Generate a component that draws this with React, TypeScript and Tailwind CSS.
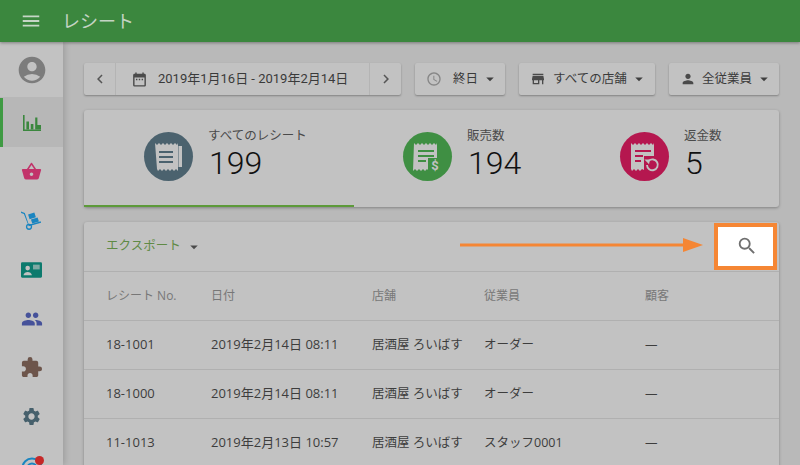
import {
  MdMenu,
  MdAccountCircle,
  MdShoppingBasket,
  MdPeople,
  MdExtension,
  MdSettings,
  MdChevronLeft,
  MdChevronRight,
  MdDateRange,
  MdAccessTime,
  MdStore,
  MdPerson,
  MdArrowDropDown,
  MdSearch,
} from "react-icons/md";
import type { ReactNode } from "react";

const FONT = "font-['Roboto','Noto_Sans_CJK_JP',sans-serif]";
const BODY_FONT = "font-['Open_Sans','Noto_Sans_CJK_JP',sans-serif]";

const rows = [
  { id: "18-1001", date: "2019年2月14日 08:11", staff: "オーダー" },
  { id: "18-1000", date: "2019年2月14日 08:11", staff: "オーダー" },
  { id: "11-1013", date: "2019年2月13日 10:57", staff: "スタッフ0001" },
];

const ZIGZAG_TOP = "M1 1l2 2 2-2 2 2 2-2 2 2 2-2 2 2 2-2 2 2 2-2 2 2 1-2";

function BarsIcon() {
  return (
    <svg viewBox="0 0 18 16" className="w-[18px] h-[16px]" fill="#3b873e">
      <path d="M0 0h1.6v14.4H18V16H0z" />
      <path d="M3.4 6.4h2.6v8H3.4zM7.8 9h2.6v5.4H7.8zM12.2 2.4h2.2V10H18v4.4h-5.8z" />
    </svg>
  );
}

function DollyIcon() {
  return (
    <svg viewBox="0 0 22 20" className="w-[21px] h-[19px]" fill="#1a85c0">
      <path d="M0 0.6l4 1.4 4.2 12.4 12.4-3.6.5 1.5-13 3.8L3 3.2 0 2.2z" />
      <circle cx="8.4" cy="16.6" r="2.6" fill="none" stroke="#1a85c0" strokeWidth="1.4" />
      <path d="M7.4 3.6l6.6-2 1.6 5-6.6 2zM10.4 9l7-2.2 1.4 4.2-7 2.2z" />
    </svg>
  );
}

function CardIcon() {
  return (
    <svg viewBox="0 0 22 16" className="w-[21px] h-[16px]">
      <rect width="22" height="16" rx="1.2" fill="#0c7a6d" />
      <circle cx="7" cy="6" r="2.4" fill="#c2c2c2" />
      <path d="M2.6 13.6c0-2.4 2.6-3.6 4.4-3.6s4.4 1.2 4.4 3.6z" fill="#c2c2c2" />
      <rect x="12.6" y="2.4" width="7" height="5" fill="#7fa9a4" />
    </svg>
  );
}

function ReachIcon() {
  return (
    <div className="relative w-[22px] h-[22px] mt-[4px]">
      <svg viewBox="0 0 22 22" className="w-[22px] h-[22px]" fill="none" stroke="#1a85c0" strokeWidth="2">
        <circle cx="11" cy="11" r="9.5" />
        <circle cx="11" cy="11" r="4.5" />
      </svg>
      <span className="absolute -top-[1px] -right-[1px] w-[9px] h-[9px] rounded-full bg-[#c62828]" />
    </div>
  );
}

function AllReceiptsIcon() {
  return (
    <svg viewBox="0 0 30 30" className="w-[30px] h-[30px]">
      <path d="M24.5 4H28v21h-3.5z" fill="#c2c2c2" />
      <path d={`${ZIGZAG_TOP}V29l-2-2-2 2-2-2-2 2-2-2-2 2-2-2-2 2-2-2-2 2-1-2z`} fill="#c2c2c2" />
      <path d="M5 9h14v2H5zM5 14h14v2H5zM5 19h14v2H5z" fill="#4b626e" />
    </svg>
  );
}

function SalesIcon() {
  return (
    <svg viewBox="0 0 30 30" className="w-[30px] h-[30px]">
      <path d={`${ZIGZAG_TOP}V16H15v12l-1-1-2 2-2-2-2 2-2-2-2 2-2-2-2 2z`} fill="#c2c2c2" />
      <path d="M5 8h16v2H5zM5 13h16v2H5zM5 18h8v2H5z" fill="#3f8f43" />
      <text x="22" y="28" fontSize="13" textAnchor="middle" fill="#c2c2c2" fontWeight="700">$</text>
    </svg>
  );
}

function RefundIcon() {
  return (
    <svg viewBox="0 0 30 30" className="w-[30px] h-[30px]">
      <path d={`${ZIGZAG_TOP}V14H14v14l-2-1-2 2-2-2-2 2-2-2-2 2-1-2z`} fill="#c2c2c2" />
      <path d="M5 8h16v2H5zM5 13h8v2H5zM5 18h6v2H5z" fill="#b5174f" />
      <path d="M17 23a5.4 5.4 0 1 0 1.8-4.2" fill="none" stroke="#c2c2c2" strokeWidth="1.9" />
      <path d="M14.4 17.4l5.6.2-1 4.6z" fill="#c2c2c2" />
    </svg>
  );
}

function NavItem({ children, active }: { children: ReactNode; active?: boolean }) {
  return (
    <div
      className={
        active
          ? "h-[49px] shrink-0 flex items-center justify-center bg-[#b7b7b7] border-l-[3px] border-[#3f9a43] pr-[3px]"
          : "h-[49px] shrink-0 flex items-center justify-center"
      }
    >
      {children}
    </div>
  );
}

function FilterButton({ icon, label, width, gap }: { icon: ReactNode; label: string; width: string; gap: string }) {
  return (
    <div className={`h-[32px] ${width} flex items-center pl-[11px] bg-[#c2c2c2] rounded-[2px] shadow-[0_1px_2px_rgba(0,0,0,0.3)] text-[12.5px] text-[#3a3a3a] whitespace-nowrap`}>
      <span className="w-[16px] flex justify-center">{icon}</span>
      <span className={gap}>{label}</span>
      <MdArrowDropDown className="ml-[3px] text-[18px] text-[#3f3f3f]" />
    </div>
  );
}

function Stat({
  color,
  label,
  value,
  icon,
  active,
  box,
}: {
  color: string;
  label: string;
  value: string;
  icon: ReactNode;
  active?: boolean;
  box: string;
}) {
  return (
    <div className={active ? `h-full flex items-center ${box} border-b-2 border-[#5d9a3a] pb-[2px]` : `h-full flex items-center ${box} pb-[4px]`}>
      <div className="w-[49px] h-[49px] rounded-full flex items-center justify-center" style={{ backgroundColor: color }}>
        {icon}
      </div>
      <div className="ml-[16px] mb-[3px]">
        <div className="text-[12.5px] leading-[16px] text-[#4a4a4a] -ml-[1px]">{label}</div>
        <div className="text-[32px] leading-[38px] font-light text-[#111]">{value}</div>
      </div>
    </div>
  );
}

const cols = ["w-[105px]", "w-[161px]", "w-[112px]", "w-[161px]", "flex-1"];

export default function App() {
  return (
    <div className={`w-[800px] h-[465px] overflow-hidden flex flex-col bg-[#b9b9b9] ${FONT}`}>
      <header className="h-[42px] shrink-0 flex items-center bg-[#3b873e] shadow-[0_1px_3px_rgba(0,0,0,0.35)] z-10">
        <MdMenu className="ml-[20px] text-[#c6d6c6] text-[22px]" />
        <h1 className="ml-[20px] text-[18px] text-[#c4d4c4]">レシート</h1>
      </header>
      <div className="flex-1 min-h-0 flex">
        <aside className="w-[63px] shrink-0 bg-[#c2c2c2] shadow-[2px_0_6px_rgba(0,0,0,0.15)] flex flex-col overflow-hidden">
          <div className="h-[56px] flex items-center justify-center border-b border-[#b7b7b7] shrink-0">
            <MdAccountCircle className="text-[32px] text-[#7c7c7c]" />
          </div>
          <NavItem active><BarsIcon /></NavItem>
          <NavItem><MdShoppingBasket className="text-[21px] text-[#c2336a]" /></NavItem>
          <NavItem><DollyIcon /></NavItem>
          <NavItem><CardIcon /></NavItem>
          <NavItem><MdPeople className="text-[22px] text-[#46529a]" /></NavItem>
          <NavItem><MdExtension className="text-[23px] text-[#6d554b]" /></NavItem>
          <NavItem><MdSettings className="text-[21px] text-[#46606c]" /></NavItem>
          <NavItem><ReachIcon /></NavItem>
        </aside>
        <main className="flex-1 min-w-0 pl-[21px] pr-[21px] pt-[21px] flex flex-col">
          <div className="flex items-center h-[32px] shrink-0">
            <div className="h-[32px] flex items-center bg-[#c2c2c2] rounded-[2px] shadow-[0_1px_2px_rgba(0,0,0,0.3)] text-[13px] text-[#3a3a3a] whitespace-nowrap">
              <div className="w-[32px] h-full flex items-center justify-center border-r border-[#b4b4b4]">
                <MdChevronLeft className="text-[18px] text-[#555]" />
              </div>
              <div className="w-[253px] h-full flex items-center pl-[15px]">
                <MdDateRange className="text-[17px] text-[#4a4a4a]" />
                <span className="ml-[10px]">2019年1月16日 - 2019年2月14日</span>
              </div>
              <div className="w-[32px] h-full flex items-center justify-center border-l border-[#b4b4b4]">
                <MdChevronRight className="text-[18px] text-[#555]" />
              </div>
            </div>
            <div className="ml-[14px]"><FilterButton width="w-[90px]" gap="ml-[11px]" label="終日" icon={<MdAccessTime className="text-[16px] text-[#868686]" />} /></div>
            <div className="ml-[14px]"><FilterButton width="w-[136px]" gap="ml-[7px]" label="すべての店舗" icon={<MdStore className="text-[16px] text-[#4a4a4a]" />} /></div>
            <div className="ml-[14px]"><FilterButton width="w-[110px]" gap="ml-[6px]" label="全従業員" icon={<MdPerson className="text-[16px] text-[#4a4a4a]" />} /></div>
          </div>

          <section className="mt-[15px] h-[97px] shrink-0 flex bg-[#c2c2c2] rounded-[3px] shadow-[0_1px_3px_rgba(0,0,0,0.3)]">
            <Stat active box="pl-[60px] w-[270px] shrink-0" color="#4b626e" label="すべてのレシート" value="199" icon={<AllReceiptsIcon />} />
            <Stat box="pl-[49px] w-[216px] shrink-0" color="#3f8f43" label="販売数" value="194" icon={<SalesIcon />} />
            <Stat box="pl-[50px] flex-1" color="#b5174f" label="返金数" value="5" icon={<RefundIcon />} />
          </section>

          <section className={`relative mt-[15px] flex-1 bg-[#c2c2c2] rounded-t-[3px] shadow-[0_1px_3px_rgba(0,0,0,0.3)] text-[12.5px] ${BODY_FONT}`}>
            <div className="h-[50px] flex items-center justify-between pl-[22px] border-b border-[#b0b0b0]">
              <div className="flex items-center text-[#5f8a45]">
                <span>エクスポート</span>
                <MdArrowDropDown className="ml-[4px] text-[18px] text-[#4a4a4a]" />
              </div>
              <div className="mr-[2px] w-[63px] h-[47px] flex items-center justify-center bg-white border-4 border-[#f58634]">
                <MdSearch className="ml-[3px] -mt-[1px] text-[22px] text-[#6f6f6f]" />
              </div>
            </div>
            <div className="h-[49px] flex items-center pl-[22px] border-b border-[#b0b0b0] text-[12px] text-[#777]">
              <div className={cols[0]}>レシート No.</div>
              <div className={cols[1]}>日付</div>
              <div className={cols[2]}>店舗</div>
              <div className={cols[3]}>従業員</div>
              <div className={cols[4]}>顧客</div>
            </div>
            {rows.map((r) => (
              <div key={r.id} className="h-[49px] flex items-center pl-[22px] border-b border-[#b0b0b0] text-[#3d3d3d]">
                <div className={`${cols[0]} text-[13px]`}>{r.id}</div>
                <div className={`${cols[1]} text-[13px]`}>{r.date}</div>
                <div className={cols[2]}>居酒屋 ろいばす</div>
                <div className={cols[3]}>{r.staff}</div>
                <div className={cols[4]}>—</div>
              </div>
            ))}
            <svg viewBox="0 0 243 14" className="absolute left-[376px] top-[16px] w-[243px] h-[14px]">
              <rect x="0" y="5.5" width="224" height="3" fill="#f58634" />
              <path d="M223 0l20 7-20 7z" fill="#f58634" />
            </svg>
          </section>
        </main>
      </div>
    </div>
  );
}
